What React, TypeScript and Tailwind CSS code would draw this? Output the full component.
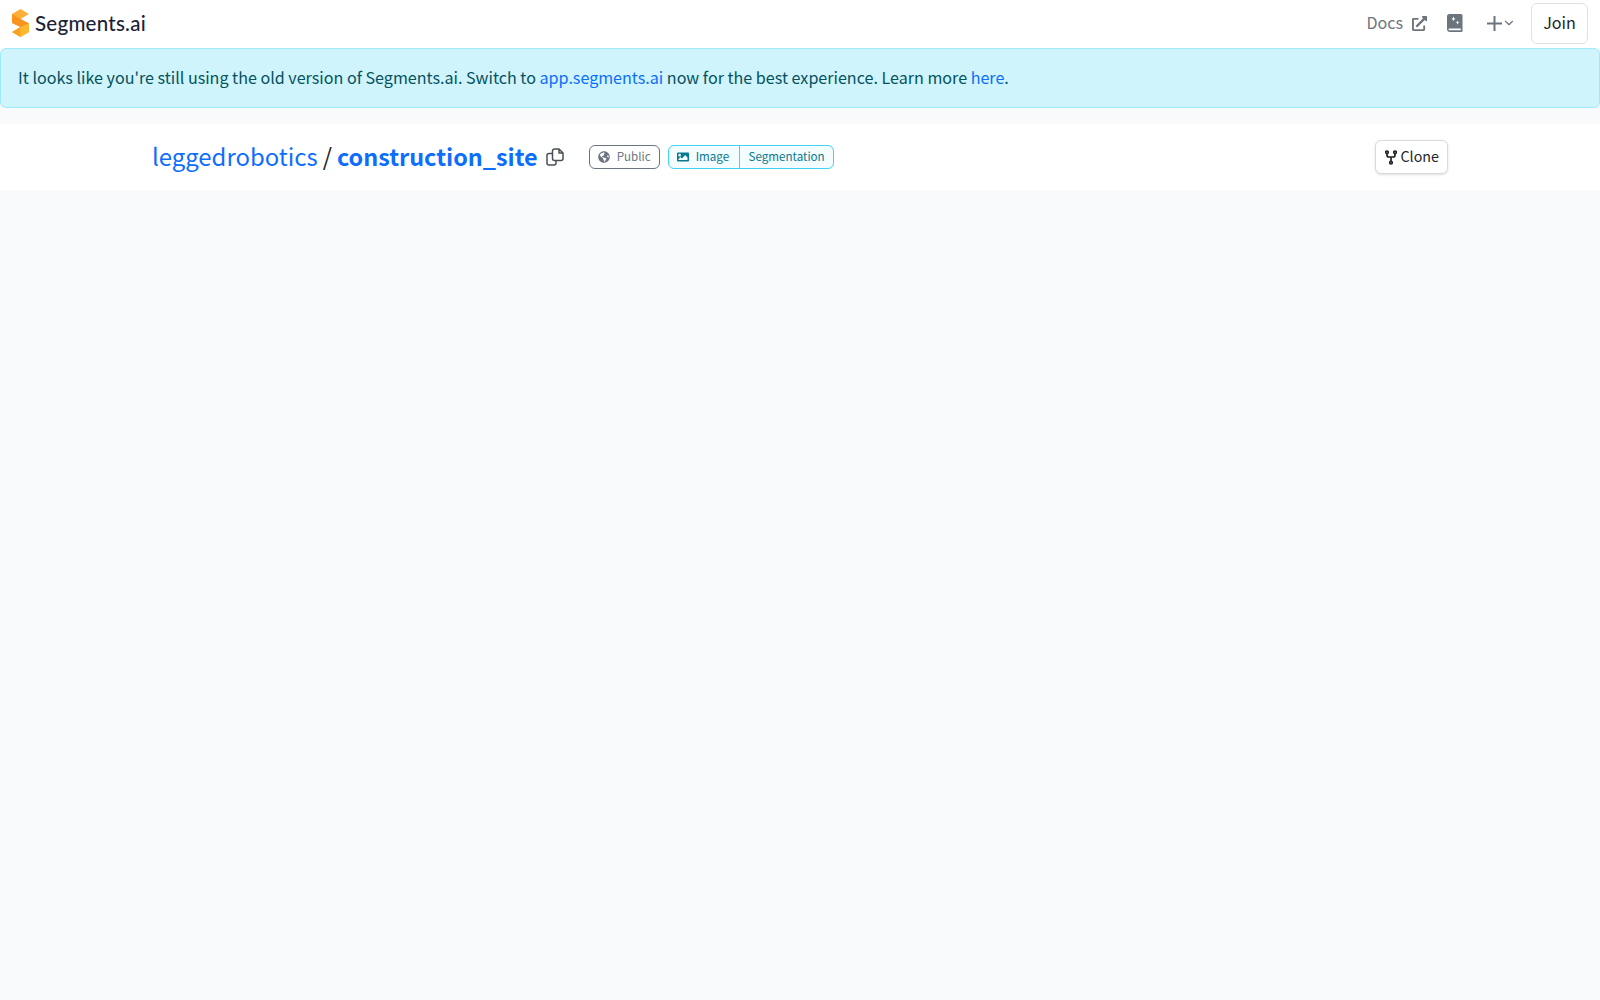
import { FaExternalLinkAlt, FaGlobeAmericas, FaImage } from "react-icons/fa";
import { LuChevronDown } from "react-icons/lu";

function Logo() {
  return (
    <svg width="17" height="28" viewBox="0 0 17 28" className="shrink-0">
      <path d="M8.5 0 L17 5 L8.5 10 L17 14.5 V23 L8.5 28 L0 23 L8.5 18 L0 14 V5 Z" fill="#fbb03b" />
      <path d="M0 5 L8.5 10 L17 14.5 L8.5 18 L0 14 Z" fill="#f7931e" />
      <path d="M0 23 L8.5 18 V28 Z" fill="#f7a21e" />
      <path d="M8.5 18 L17 14.5 V23 L8.5 28 Z" fill="#fdb92e" />
    </svg>
  );
}

function BookIcon() {
  return (
    <svg width="16" height="18" viewBox="0 0 16 18">
      <path d="M2.5 0 H14 a1.5 1.5 0 0 1 1.5 1.5 V17 a1 1 0 0 1 -1 1 H3 a3 3 0 0 1 -3 -3 V2.5 A2.5 2.5 0 0 1 2.5 0 Z" fill="#6c757d" />
      <path d="M2 14.6 H13.8 V16.2 H3 a0.8 0.8 0 0 1 -1 -1.6 Z" fill="#fff" />
      <path d="M6.5 2.6 l0.7 1.6 1.6 0.7 -1.6 0.7 -0.7 1.6 -0.7 -1.6 -1.6 -0.7 1.6 -0.7 Z M10.6 6.6 l0.6 1.3 1.3 0.6 -1.3 0.6 -0.6 1.3 -0.6 -1.3 -1.3 -0.6 1.3 -0.6 Z" fill="#fff" />
    </svg>
  );
}

function PlusIcon() {
  return (
    <svg width="15" height="15" viewBox="0 0 15 15">
      <path d="M7.5 0.5 V14.5 M0.5 7.5 H14.5" stroke="#6c757d" strokeWidth="2" strokeLinecap="round" fill="none" />
    </svg>
  );
}

function ForkIcon() {
  return (
    <svg width="12" height="15" viewBox="0 0 12 15" fill="none" stroke="#212529" strokeWidth="1.7" className="mt-[2px]">
      <circle cx="2" cy="2.3" r="1.3" />
      <circle cx="10" cy="2.3" r="1.3" />
      <circle cx="6" cy="12.7" r="1.3" />
      <path d="M2 3.6 V5 a2 2 0 0 0 2 2 H8 a2 2 0 0 0 2 -2 V3.6 M6 7 V11.4" />
    </svg>
  );
}

function CopyIcon() {
  return (
    <svg width="18" height="18" viewBox="0 0 18 18" fill="none" stroke="#495057" strokeWidth="1.5" strokeLinejoin="round" className="ml-2 shrink-0">
      <path d="M6.5 5.5 H3 a2 2 0 0 0 -2 2 V15 a2 2 0 0 0 2 2 H8 a2 2 0 0 0 2 -2 V12.5" />
      <path d="M8.5 1 H13 L17 5 V10.5 a2 2 0 0 1 -2 2 H8.5 a2 2 0 0 1 -2 -2 V3 a2 2 0 0 1 2 -2 Z M13 1 V5 H17" />
    </svg>
  );
}

export default function App() {
  const font = "font-['Noto_Sans_CJK_JP','Noto_Sans',sans-serif]";
  return (
    <div className={`min-h-[1000px] bg-[#f9fafc] ${font} text-[#212529]`}>
      <nav className="flex h-12 items-center justify-between bg-white pb-[2px] pl-3 pr-3">
        <div className="flex items-center gap-[6px]">
          <Logo />
          <span className="font-['Lato',sans-serif] text-[20.5px] font-medium leading-none tracking-[0.25px] text-[#1c2238]">Segments.ai</span>
        </div>
        <div className="flex items-center text-[#6c757d]">
          <span className="pb-[2px] text-[16.1px]">Docs</span>
          <FaExternalLinkAlt className="ml-[9px] text-[15px]" />
          <span className="ml-[19.5px]"><BookIcon /></span>
          <span className="ml-[24.5px]"><PlusIcon /></span>
          <LuChevronDown className="text-[14px]" />
          <button className="ml-[15px] h-[41px] w-[57px] rounded-md border border-[#dee2e6] bg-white pb-[2px] text-[16.1px] text-[#212529]">Join</button>
        </div>
      </nav>
      <div className="flex h-[60px] items-center rounded-md border border-[#9eeaf9] bg-[#cff4fc] pb-[2px] pl-[17px] pr-4 text-[16.1px] text-[#055160]">
        <span>
          It looks like you're still using the old version of Segments.ai. Switch to{" "}
          <a className="text-[#0d6efd]">app.segments.ai</a> now for the best experience. Learn more{" "}
          <a className="text-[#0d6efd]">here</a>.
        </span>
      </div>
      <header className="mt-4 bg-white">
        <div className="mx-auto flex h-[66px] w-[1296px] items-center justify-between">
          <div className="flex items-center">
            <h1 className="flex items-baseline pb-[2px] leading-none">
              <a className="text-[23.9px] text-[#0d6efd]">leggedrobotics</a>
              <span className="mx-[5px] text-[23.6px]">/</span>
              <a className="text-[23.4px] font-semibold text-[#0d6efd]">construction_site</a>
            </h1>
            <CopyIcon />
            <span className="ml-[25px] flex h-6 items-center gap-[7px] rounded-md border border-[#6c757d] px-2 text-[11.6px] text-[#6c757d]">
              <FaGlobeAmericas className="text-[12px]" />
              Public
            </span>
            <span className="ml-2 flex h-6 items-center rounded-md border border-[#3dd5f3] bg-[#f3fcfe] text-[11.6px] text-[#087990]">
              <span className="flex h-full items-center gap-[7px] border-r border-[#3dd5f3] pl-2 pr-[10px]">
                <FaImage className="text-[12px]" />
                Image
              </span>
              <span className="pl-[8.5px] pr-2">Segmentation</span>
            </span>
          </div>
          <button className="flex h-[34px] items-center gap-1 rounded-md border border-[#d8dae0] bg-white pb-[2px] pl-[8.5px] pr-2 text-[14.3px] shadow-sm">
            <ForkIcon />
            Clone
          </button>
        </div>
      </header>
    </div>
  );
}
